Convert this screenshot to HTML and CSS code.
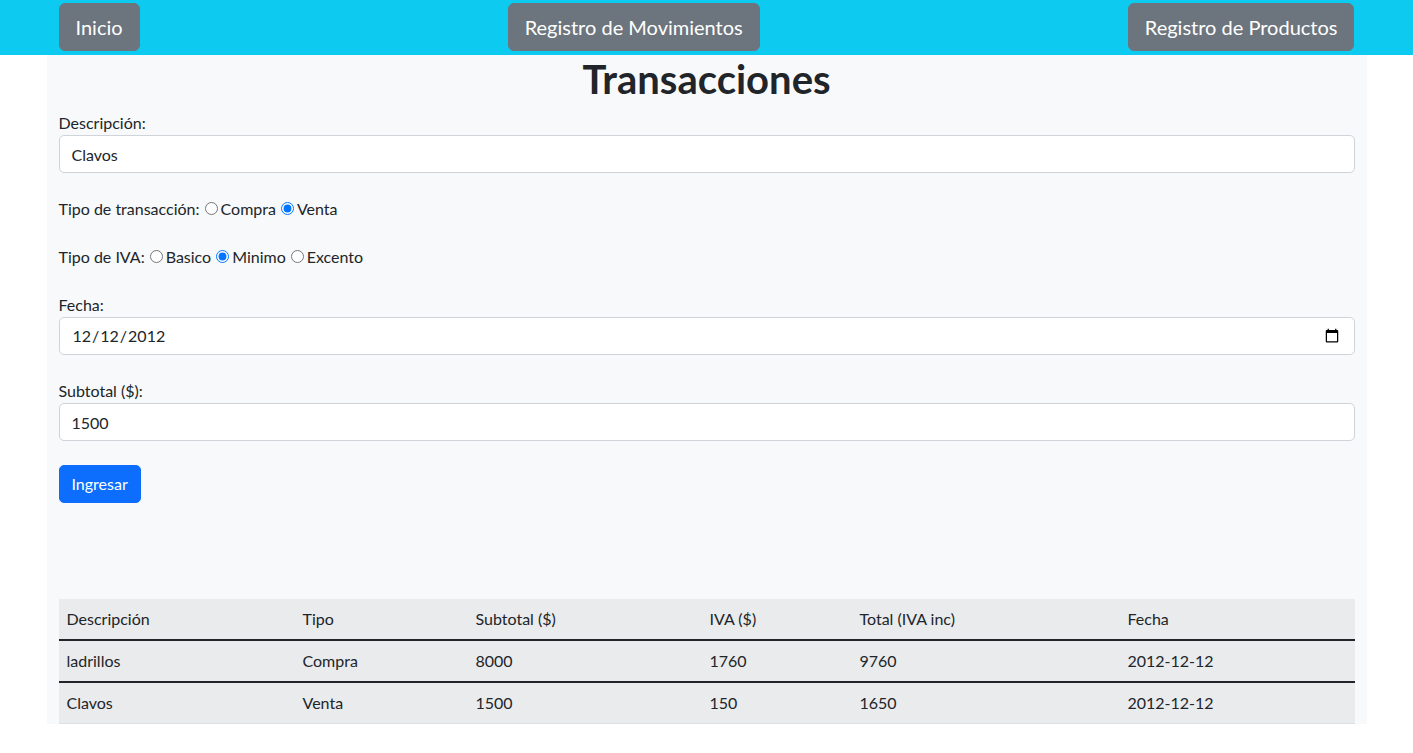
FILE: index.html
```html
<!DOCTYPE html>
<html lang="es">
<head>
<meta charset="utf-8">
<title>Transacciones</title>
<link rel="stylesheet" href="styles.css">
</head>
<body>
<nav class="topbar">
  <div class="topbar-inner">
    <a class="btn btn-nav" href="#">Inicio</a>
    <a class="btn btn-nav" href="#">Registro de Movimientos</a>
    <a class="btn btn-nav" href="#">Registro de Productos</a>
  </div>
</nav>
<main class="panel">
  <h1 class="title">Transacciones</h1>
  <form class="form">
    <div class="field">
      <label class="label" for="desc">Descripción:</label>
      <input class="control" id="desc" type="text" value="Clavos">
    </div>
    <div class="field line">Tipo de transacción:<input type="radio" name="tipo" id="compra"><label for="compra">Compra</label><input type="radio" name="tipo" id="venta" checked><label for="venta">Venta</label></div>
    <div class="field line">Tipo de IVA:<input type="radio" name="iva" id="basico"><label for="basico">Basico</label><input type="radio" name="iva" id="minimo" checked><label for="minimo">Minimo</label><input type="radio" name="iva" id="excento"><label for="excento">Excento</label></div>
    <div class="field">
      <label class="label" for="fecha">Fecha:</label>
      <input class="control" id="fecha" type="date" value="2012-12-12">
    </div>
    <div class="field">
      <label class="label" for="sub">Subtotal ($):</label>
      <input class="control" id="sub" type="text" value="1500">
    </div>
    <button class="btn btn-primary" type="button">Ingresar</button>
  </form>
  <table class="table">
    <thead>
      <tr>
        <th class="c-desc">Descripción</th>
        <th class="c-tipo">Tipo</th>
        <th class="c-sub">Subtotal ($)</th>
        <th class="c-iva">IVA ($)</th>
        <th class="c-total">Total (IVA inc)</th>
        <th class="c-fecha">Fecha</th>
      </tr>
    </thead>
    <tbody>
      <tr>
        <td>ladrillos</td><td>Compra</td><td>8000</td><td>1760</td><td>9760</td><td>2012-12-12</td>
      </tr>
      <tr>
        <td>Clavos</td><td>Venta</td><td>1500</td><td>150</td><td>1650</td><td>2012-12-12</td>
      </tr>
    </tbody>
  </table>
</main>
</body>
</html>
```
FILE: styles.css
```css
* { box-sizing: border-box; }
html, body { margin: 0; padding: 0; }
body {
  font-family: Lato, "Noto Sans", sans-serif;
  font-size: 16px;
  line-height: 1.5;
  color: #212529;
  background: #fff;
}
.topbar {
  background: #0dcaf0;
  height: 55px;
  padding-top: 3px;
}
.topbar-inner {
  width: 1320px;
  margin: 0 auto;
  padding: 0 12px;
  display: flex;
  justify-content: space-between;
}
.btn {
  display: inline-block;
  border: 1px solid transparent;
  color: #fff;
  text-decoration: none;
  font-family: inherit;
  line-height: 1.5;
  cursor: pointer;
}
.btn-nav {
  background: #6c757d;
  border-color: #6c757d;
  font-size: 20px;
  padding: 8px 16px;
  border-radius: 6px;
}
.btn-primary {
  background: #0d6efd;
  border-color: #0d6efd;
  font-size: 16px;
  padding: 6px 12px;
  border-radius: 5px;
}
.panel {
  width: 1320px;
  margin: 0 auto;
  padding: 0 12px;
  background: #f8f9fa;
}
.title {
  margin: 0 0 8px;
  font-size: 40px;
  line-height: 1.2;
  font-weight: 700;
  text-align: center;
}
.form { margin-bottom: 96px; }
.field { margin-bottom: 24px; }
.label { display: block; }
.line { height: 24px; }
.line input[type="radio"] {
  margin: 3px 3px 0 5px;
  accent-color: #0075ff;
}
.control {
  display: block;
  width: 100%;
  height: 38px;
  padding: 6px 12px;
  font-family: inherit;
  font-size: 16px;
  line-height: 1.5;
  color: #212529;
  background: #fff;
  border: 1px solid #ced4da;
  border-radius: 5px;
}
.table {
  width: 100%;
  border-collapse: collapse;
  background: #e9ebed;
  table-layout: fixed;
}
.table th, .table td {
  text-align: left;
  font-weight: 400;
  padding: 8px;
  border-bottom: 1px solid #dee2e6;
}
.table thead th { border-bottom: 2px solid #212529; }
.table tbody tr:first-child td { border-bottom: 2px solid #212529; }
.c-desc { width: 236px; }
.c-tipo { width: 173px; }
.c-sub { width: 234px; }
.c-iva { width: 150px; }
.c-total { width: 268px; }
.c-fecha { width: 235px; }
```
